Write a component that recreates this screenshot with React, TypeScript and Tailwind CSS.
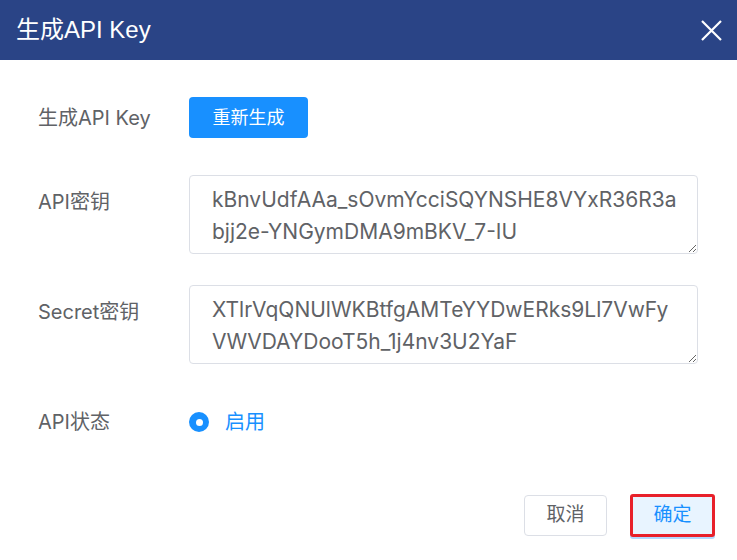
import { useState } from "react";

const apiKey = "kBnvUdfAAa_sOvmYcciSQYNSHE8VYxR36R3abjj2e-YNGymDMA9mBKV_7-IU";
const secret = "XTlrVqQNUlWKBtfgAMTeYYDwERks9Ll7VwFyVWVDAYDooT5h_1j4nv3U2YaF";

export default function App() {
  const [enabled] = useState(true);

  return (
    <div className="w-[737px] h-[560px] bg-white font-['Inter','Noto_Sans_CJK_SC',sans-serif] text-[#606266] overflow-hidden">
      {/* header */}
      <div className="h-[60px] bg-[#2a4486] flex items-center justify-between pl-4 pr-[14px]">
        <h1 className="text-[24px] text-white font-['Liberation_Sans','Noto_Sans_CJK_SC',sans-serif]">
          生成API Key
        </h1>
        <button className="w-[24px] h-[24px] flex items-center justify-center text-white">
          <svg width="21" height="21" viewBox="0 0 21 21" fill="none" stroke="currentColor" strokeWidth="2.2">
            <path d="M1 1L20 20M20 1L1 20" />
          </svg>
        </button>
      </div>

      {/* body */}
      <div className="pl-[38px] pr-[39px] pt-[37px]">
        <div className="flex items-center h-[41px]">
          <label className="w-[151px] text-[20px]">生成API Key</label>
          <button className="h-[41px] w-[119px] rounded-[4px] bg-[#1890ff] text-white text-[18px]">重新生成</button>
        </div>

        <div className="flex mt-[37px]">
          <label className="w-[151px] text-[20px] pt-[12px]">API密钥</label>
          <textarea
            readOnly
            value={apiKey}
            className="flex-1 h-[79px] border border-[#dcdfe6] rounded-[4px] pl-[22px] pr-[20px] pt-[8px] text-[21px] leading-[32px] text-[#606266] break-all outline-none"
          />
        </div>

        <div className="flex mt-[31px]">
          <label className="w-[151px] text-[20px] pt-[12px]">Secret密钥</label>
          <textarea
            readOnly
            value={secret}
            className="flex-1 h-[79px] border border-[#dcdfe6] rounded-[4px] pl-[22px] pr-[20px] pt-[8px] text-[21px] leading-[32px] text-[#606266] break-all outline-none"
          />
        </div>

        <div className="flex items-center h-[40px] mt-[38px]">
          <label className="w-[151px] text-[20px]">API状态</label>
          <div className="flex items-center gap-[16px]">
            <span className="w-[20px] h-[20px] rounded-full bg-[#1890ff] flex items-center justify-center">
              {enabled && <span className="w-[7px] h-[7px] rounded-full bg-white" />}
            </span>
            <span className="text-[20px] text-[#1890ff]">启用</span>
          </div>
        </div>
      </div>

      {/* footer */}
      <div className="flex justify-end items-center gap-[23px] pr-[22px] mt-[52px]">
        <button className="w-[83px] h-[41px] border border-[#dcdfe6] rounded-[4px] text-[19px] text-[#606266] bg-white">
          取消
        </button>
        <button className="w-[85px] h-[43px] rounded-[3px] border-[3px] border-[#e8202a] bg-[#e8f4ff] text-[19px] text-[#1890ff] shadow-[0_2px_0_#b3d8ff]">
          确定
        </button>
      </div>
    </div>
  );
}
